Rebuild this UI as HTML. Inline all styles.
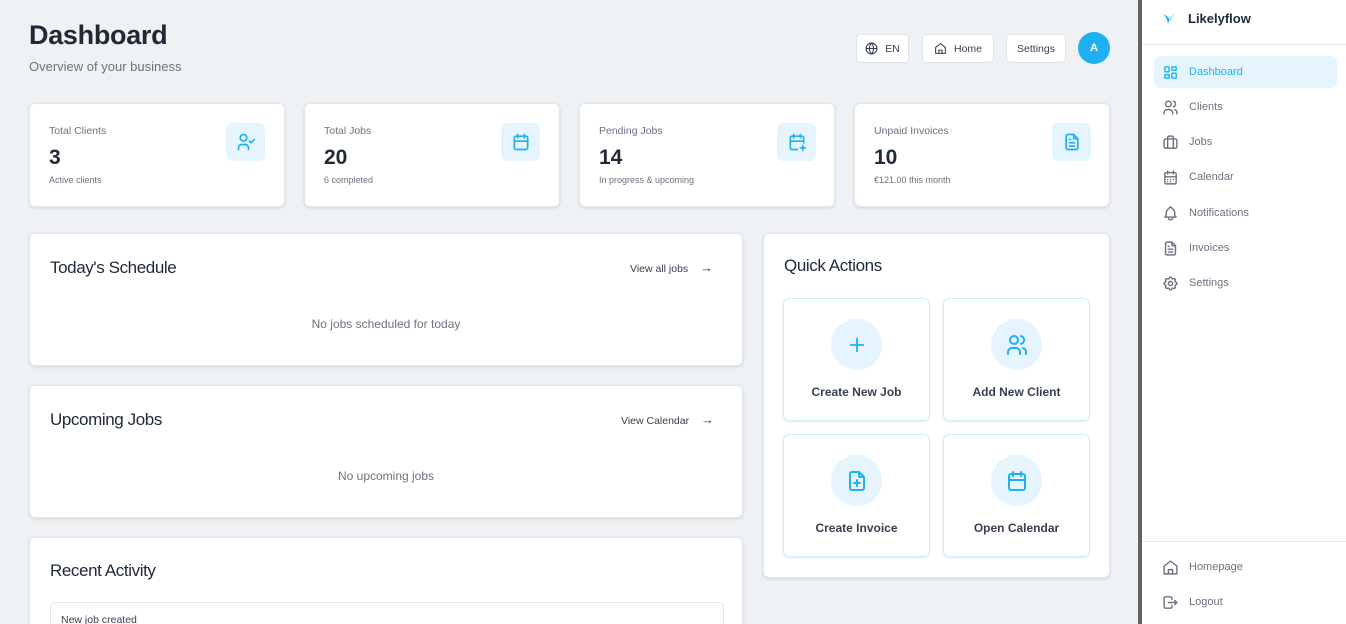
<!DOCTYPE html>
<html style="overflow:hidden;height:624px"><head><meta charset="utf-8"><style>
*{box-sizing:border-box;margin:0;padding:0}
body{width:1346px;height:624px;overflow:hidden;background:#eff2f5;font-family:"Liberation Sans",sans-serif;color:#1f2937;position:relative}
.abs{position:absolute}
.card{position:absolute;background:#fff;border-radius:6px;box-shadow:0 1px 3px rgba(0,0,0,.12);border:1px solid #e3e7ec}
svg{fill:none;stroke-linecap:round;stroke-linejoin:round}
.lbl{font-size:10.5px;color:#6b7280}
.num{font-size:21px;font-weight:bold;color:#1f2937}
.sub{font-size:9px;color:#6b7280}
.ibox{position:absolute;width:39px;height:38px;border-radius:6px;background:#e6f5fd;display:flex;align-items:center;justify-content:center}
.btn{position:absolute;top:34px;height:29px;background:#fff;border:1px solid #dfe3e8;border-radius:4px;font-size:10.5px;color:#374151;display:flex;align-items:center;justify-content:center;gap:7px}
h2{font-size:17px;font-weight:normal;color:#1f2937;letter-spacing:-.4px}
.link{position:absolute;font-size:10.5px;color:#374151}
.link span{font-size:13px;margin-left:9px}
.empty{position:absolute;width:100%;text-align:center;font-size:12px;color:#6b7280}
.qa{position:absolute;width:147px;height:123px;border:1px solid #cfeaf9;border-radius:6px;background:#fff;box-shadow:0 1px 2px rgba(0,0,0,.08)}
.qa .c{position:absolute;left:47px;top:20px;width:51px;height:51px;border-radius:50%;background:#e6f5fd;display:flex;align-items:center;justify-content:center}
.qa .t{position:absolute;top:86px;width:100%;text-align:center;font-size:12px;font-weight:bold;color:#374151}
.nav{position:absolute;left:1154px;width:183px;height:32px;border-radius:6px;display:flex;align-items:center;font-size:11px;color:#6b7280}
.nav svg{margin-left:8px;margin-right:10px}
</style></head><body>
<div class="abs" style="left:29px;top:20px;font-size:27px;font-weight:bold;color:#1f2937;letter-spacing:-.3px">Dashboard</div>
<div class="abs" style="left:29px;top:59px;font-size:13px;color:#6b7280">Overview of your business</div>

<div class="btn" style="left:856px;width:53px"><svg width="13" height="13" viewBox="0 0 24 24" stroke="#374151" stroke-width="2"><circle cx="12" cy="12" r="10"/><path d="M2 12h20M12 2a15 15 0 0 1 0 20M12 2a15 15 0 0 0 0 20"/></svg>EN</div>
<div class="btn" style="left:922px;width:72px"><svg width="13" height="13" viewBox="0 0 24 24" stroke="#374151" stroke-width="2"><path d="M3 10l9-7 9 7v11H3z"/><path d="M9 21v-6h6v6"/></svg>Home</div>
<div class="btn" style="left:1006px;width:60px">Settings</div>
<div class="abs" style="left:1078px;top:32px;width:32px;height:32px;border-radius:50%;background:#1fb0f3;color:#fff;font-size:11px;font-weight:bold;display:flex;align-items:center;justify-content:center">A</div>

<div class="card" style="left:29px;top:103px;width:256px;height:104px">
<div class="lbl abs" style="left:19px;top:21px">Total Clients</div><div class="num abs" style="left:19px;top:42px">3</div><div class="sub abs" style="left:19px;top:71px">Active clients</div>
<div class="ibox" style="left:196px;top:19px"><svg width="20" height="20" viewBox="0 0 24 24" stroke="#1fb0f3" stroke-width="2"><circle cx="9" cy="7" r="4"/><path d="M3 21v-2a4 4 0 0 1 4-4h4a4 4 0 0 1 4 4v2"/><path d="M16 11l2 2 4-4"/></svg></div></div>
<div class="card" style="left:304px;top:103px;width:256px;height:104px">
<div class="lbl abs" style="left:19px;top:21px">Total Jobs</div><div class="num abs" style="left:19px;top:42px">20</div><div class="sub abs" style="left:19px;top:71px">6 completed</div>
<div class="ibox" style="left:196px;top:19px"><svg width="20" height="20" viewBox="0 0 24 24" stroke="#1fb0f3" stroke-width="2"><rect x="4" y="5" width="16" height="16" rx="2"/><path d="M16 3v4M8 3v4M4 11h16"/></svg></div></div>
<div class="card" style="left:579px;top:103px;width:256px;height:104px">
<div class="lbl abs" style="left:19px;top:21px">Pending Jobs</div><div class="num abs" style="left:19px;top:42px">14</div><div class="sub abs" style="left:19px;top:71px">In progress &amp; upcoming</div>
<div class="ibox" style="left:197px;top:19px"><svg width="20" height="20" viewBox="0 0 24 24" stroke="#1fb0f3" stroke-width="2"><path d="M12.5 21H6a2 2 0 0 1-2-2V7a2 2 0 0 1 2-2h12a2 2 0 0 1 2 2v6"/><path d="M16 3v4M8 3v4M4 11h16M16 19h6M19 16v6"/></svg></div></div>
<div class="card" style="left:854px;top:103px;width:256px;height:104px">
<div class="lbl abs" style="left:19px;top:21px">Unpaid Invoices</div><div class="num abs" style="left:19px;top:42px">10</div><div class="sub abs" style="left:19px;top:71px">€121.00 this month</div>
<div class="ibox" style="left:197px;top:19px"><svg width="20" height="20" viewBox="0 0 24 24" stroke="#1fb0f3" stroke-width="2"><path d="M14 3v4a1 1 0 0 0 1 1h4"/><path d="M17 21H7a2 2 0 0 1-2-2V5a2 2 0 0 1 2-2h7l5 5v11a2 2 0 0 1-2 2z"/><path d="M9 9h1M9 13h6M9 17h6"/></svg></div></div>

<div class="card" style="left:29px;top:233px;width:714px;height:133px">
<h2 class="abs" style="left:20px;top:24px">Today's Schedule</h2>
<div class="link" style="left:600px;top:26px">View all jobs <span>→</span></div>
<div class="empty" style="top:83px">No jobs scheduled for today</div></div>
<div class="card" style="left:29px;top:385px;width:714px;height:133px">
<h2 class="abs" style="left:20px;top:24px">Upcoming Jobs</h2>
<div class="link" style="left:591px;top:26px">View Calendar <span>→</span></div>
<div class="empty" style="top:83px">No upcoming jobs</div></div>
<div class="card" style="left:29px;top:537px;width:714px;height:95px;overflow:hidden">
<h2 class="abs" style="left:20px;top:23px">Recent Activity</h2>
<div class="abs" style="left:20px;top:64px;width:674px;height:40px;border:1px solid #e3e7ec;border-radius:5px"><div class="abs" style="left:10px;top:11px;font-size:10.5px;color:#374151">New job created</div></div></div>

<div class="card" style="left:763px;top:233px;width:347px;height:345px">
<h2 class="abs" style="left:20px;top:22px">Quick Actions</h2>
<div class="qa" style="left:19px;top:64px"><div class="c"><svg width="22" height="22" viewBox="0 0 24 24" stroke="#1fb0f3" stroke-width="2"><path d="M12 5v14M5 12h14"/></svg></div><div class="t">Create New Job</div></div>
<div class="qa" style="left:179px;top:64px"><div class="c"><svg width="24" height="24" viewBox="0 0 24 24" stroke="#1fb0f3" stroke-width="2"><circle cx="9" cy="7" r="4"/><path d="M3 21v-2a4 4 0 0 1 4-4h4a4 4 0 0 1 4 4v2M16 3.1a4 4 0 0 1 0 7.8M21 21v-2a4 4 0 0 0-3-3.9"/></svg></div><div class="t">Add New Client</div></div>
<div class="qa" style="left:19px;top:200px"><div class="c"><svg width="24" height="24" viewBox="0 0 24 24" stroke="#1fb0f3" stroke-width="2"><path d="M14 3v4a1 1 0 0 0 1 1h4"/><path d="M17 21H7a2 2 0 0 1-2-2V5a2 2 0 0 1 2-2h7l5 5v11a2 2 0 0 1-2 2z"/><path d="M12 11v6M9 14h6"/></svg></div><div class="t">Create Invoice</div></div>
<div class="qa" style="left:179px;top:200px"><div class="c"><svg width="24" height="24" viewBox="0 0 24 24" stroke="#1fb0f3" stroke-width="2"><rect x="4" y="5" width="16" height="16" rx="2"/><path d="M16 3v4M8 3v4M4 11h16"/></svg></div><div class="t">Open Calendar</div></div>
</div>

<div class="abs" style="left:1138px;top:0;width:4px;height:624px;background:#5f6368"></div>
<div class="abs" style="left:1142px;top:0;width:204px;height:624px;background:#fff"></div>
<div class="abs" style="left:1142px;top:44px;width:204px;height:1px;background:#e5e7eb"></div>
<div class="abs" style="left:1142px;top:541px;width:204px;height:1px;background:#e5e7eb"></div>
<svg class="abs" style="left:1161px;top:12px" width="16" height="14" viewBox="0 0 16 14"><path d="M1 2c3 1 5 4 6 10 1-4 3-8 8-11-3 2-5 5-6 8C8 5 5 3 1 2z" fill="#1fb0f3" stroke="none"/></svg>
<div class="abs" style="left:1188px;top:11px;font-size:13px;font-weight:bold;color:#1f2937">Likelyflow</div>

<div class="nav" style="top:56px;background:#e6f5fd;color:#1fb0f3"><svg width="17" height="17" viewBox="0 0 24 24" stroke="#1fb0f3" stroke-width="2"><rect x="4" y="4" width="6" height="7" rx="1"/><rect x="4" y="15" width="6" height="5" rx="1"/><rect x="14" y="4" width="6" height="5" rx="1"/><rect x="14" y="13" width="6" height="7" rx="1"/></svg>Dashboard</div>
<div class="nav" style="top:91px"><svg width="17" height="17" viewBox="0 0 24 24" stroke="#6b7280" stroke-width="2"><circle cx="9" cy="7" r="4"/><path d="M3 21v-2a4 4 0 0 1 4-4h4a4 4 0 0 1 4 4v2M16 3.1a4 4 0 0 1 0 7.8M21 21v-2a4 4 0 0 0-3-3.9"/></svg>Clients</div>
<div class="nav" style="top:126px"><svg width="17" height="17" viewBox="0 0 24 24" stroke="#6b7280" stroke-width="2"><rect x="3" y="7" width="18" height="13" rx="2"/><path d="M8 7V5a2 2 0 0 1 2-2h4a2 2 0 0 1 2 2v2M8 7v13M16 7v13"/></svg>Jobs</div>
<div class="nav" style="top:161px"><svg width="17" height="17" viewBox="0 0 24 24" stroke="#6b7280" stroke-width="2"><rect x="4" y="5" width="16" height="16" rx="2"/><path d="M16 3v4M8 3v4M4 11h16M8 15h.01M12 15h.01M16 15h.01M8 18h.01M12 18h.01"/></svg>Calendar</div>
<div class="nav" style="top:197px"><svg width="17" height="17" viewBox="0 0 24 24" stroke="#6b7280" stroke-width="2"><path d="M10 5a2 2 0 1 1 4 0 7 7 0 0 1 4 6v3a4 4 0 0 0 2 3H4a4 4 0 0 0 2-3v-3a7 7 0 0 1 4-6M9 17v1a3 3 0 0 0 6 0v-1"/></svg>Notifications</div>
<div class="nav" style="top:232px"><svg width="17" height="17" viewBox="0 0 24 24" stroke="#6b7280" stroke-width="2"><path d="M14 3v4a1 1 0 0 0 1 1h4"/><path d="M17 21H7a2 2 0 0 1-2-2V5a2 2 0 0 1 2-2h7l5 5v11a2 2 0 0 1-2 2z"/><path d="M9 9h1M9 13h6M9 17h6"/></svg>Invoices</div>
<div class="nav" style="top:267px"><svg width="17" height="17" viewBox="0 0 24 24" stroke="#6b7280" stroke-width="2"><circle cx="12" cy="12" r="3"/><path d="M10.3 4.3c.4-1.8 3-1.8 3.4 0a1.7 1.7 0 0 0 2.6 1.1c1.5-.9 3.3.8 2.4 2.4a1.7 1.7 0 0 0 1 2.5c1.8.4 1.8 3 0 3.4a1.7 1.7 0 0 0-1 2.6c.9 1.5-.9 3.3-2.4 2.4a1.7 1.7 0 0 0-2.6 1c-.4 1.8-3 1.8-3.4 0a1.7 1.7 0 0 0-2.6-1c-1.500.9-3.3-.9-2.4-2.4a1.7 1.7 0 0 0-1-2.6c-1.8-.4-1.8-3 0-3.4a1.7 1.7 0 0 0 1-2.5c-.9-1.6.9-3.3 2.4-2.4a1.7 1.7 0 0 0 2.6-1.1z"/></svg>Settings</div>
<div class="nav" style="top:551px"><svg width="17" height="17" viewBox="0 0 24 24" stroke="#6b7280" stroke-width="2"><path d="M3 10l9-7 9 7v11H3z"/><path d="M9 21v-6h6v6"/></svg>Homepage</div>
<div class="nav" style="top:586px"><svg width="17" height="17" viewBox="0 0 24 24" stroke="#6b7280" stroke-width="2"><path d="M14 8V6a2 2 0 0 0-2-2H5a2 2 0 0 0-2 2v12a2 2 0 0 0 2 2h7a2 2 0 0 0 2-2v-2M9 12h12l-3-3M18 15l3-3"/></svg>Logout</div>
</body></html>
